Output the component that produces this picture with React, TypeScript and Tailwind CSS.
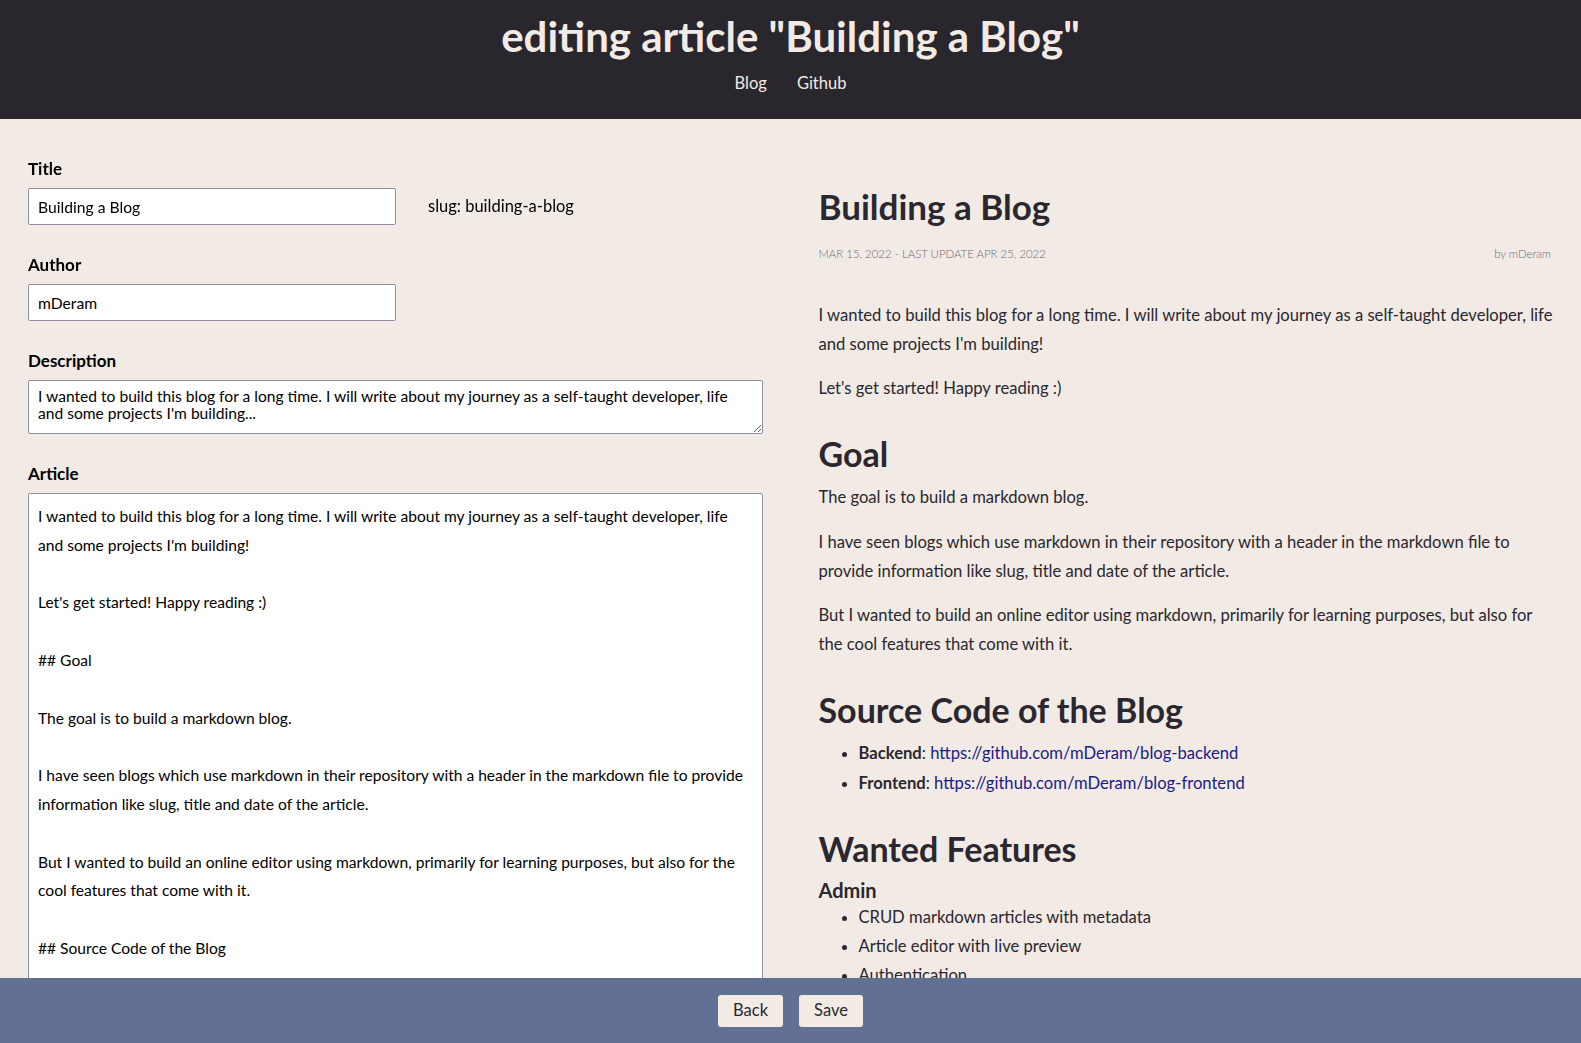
import { useState } from "react";

const ARTICLE = `I wanted to build this blog for a long time. I will write about my journey as a self-taught developer, life and some projects I'm building!

Let's get started! Happy reading :)

## Goal

The goal is to build a markdown blog.

I have seen blogs which use markdown in their repository with a header in the markdown file to provide information like slug, title and date of the article.

But I wanted to build an online editor using markdown, primarily for learning purposes, but also for the cool features that come with it.

## Source Code of the Blog

- **Backend**: https://github.com/mDeram/blog-backend
- **Frontend**: https://github.com/mDeram/blog-frontend

## Wanted Features

### Admin
- CRUD markdown articles with metadata
- Article editor with live preview
- Authentication`;

const FONT = "font-['Lato','Liberation_Sans',sans-serif]";

function Field({ label, children }: { label: string; children: React.ReactNode }) {
  return (
    <div className="mb-[28px]">
      <div className="text-[17px] leading-[24px] font-bold text-black">{label}</div>
      <div className="mt-[7px]">{children}</div>
    </div>
  );
}

export default function App() {
  const [title, setTitle] = useState("Building a Blog");
  const [author, setAuthor] = useState("mDeram");
  const [description, setDescription] = useState(
    "I wanted to build this blog for a long time. I will write about my journey as a self-taught developer, life and some projects I'm building..."
  );
  const [article, setArticle] = useState(ARTICLE);

  const inputCls =
    "block h-[37px] w-[368px] bg-white border border-[#8f8f9d] rounded-[2px] px-[9px] text-[15.7px] text-black outline-none";

  return (
    <div className={`h-screen overflow-hidden bg-[#f1eae5] ${FONT}`}>
      {/* Header */}
      <header className="h-[119px] bg-[#2a262d] flex flex-col items-center pt-[11px]">
        <h1 className="text-[42px] leading-[50px] font-bold text-[#f1eae5]">
          editing article "Building a Blog"
        </h1>
        <nav className="mt-[10px] flex gap-[30px] text-[16.5px] leading-[24px] text-[#f1eae5]">
          <a href="#">Blog</a>
          <a href="#">Github</a>
        </nav>
      </header>

      <main className="grid grid-cols-2 gap-[56px] px-[28px] pt-[38px]">
        {/* Editor */}
        <section>
          <Field label="Title">
            <div className="flex items-center gap-[32px]">
              <input className={inputCls} value={title} onChange={(e) => setTitle(e.target.value)} />
              <span className="text-[16.5px] text-black">slug: building-a-blog</span>
            </div>
          </Field>
          <Field label="Author">
            <input className={inputCls} value={author} onChange={(e) => setAuthor(e.target.value)} />
          </Field>
          <Field label="Description">
            <textarea
              rows={2}
              className="block w-full h-[54px] bg-white border border-[#8f8f9d] rounded-[2px] pl-[9px] pr-[18px] pt-[7px] pb-[8px] text-[15.6px] leading-[17px] text-black outline-none resize-y"
              value={description}
              onChange={(e) => setDescription(e.target.value)}
            />
          </Field>
          <Field label="Article">
            <textarea
              className="block w-full h-[640px] bg-white border border-[#8f8f9d] rounded-[2px] pl-[9px] pr-[18px] pt-[8px] pb-[5px] text-[15.6px] leading-[28.8px] text-black outline-none resize-y"
              value={article}
              onChange={(e) => setArticle(e.target.value)}
            />
          </Field>
        </section>

        {/* Preview */}
        <article className="text-[#2b272e] text-[16.6px] leading-[28.8px]">
          <h1 className="mt-[28px] text-[35px] leading-[42px] font-bold">Building a Blog</h1>
          <div className="mt-[19px] flex justify-between text-[11.4px] leading-[16px] text-[#6f6b72] font-light">
            <span>MAR 15, 2022 - LAST UPDATE APR 25, 2022</span>
            <span className="pr-[2px]">by mDeram</span>
          </div>

          <p className="mt-[39px]">
            I wanted to build this blog for a long time. I will write about my journey as a self-taught developer, life
            and some projects I'm building!
          </p>
          <p className="mt-[15px]">Let's get started! Happy reading :)</p>

          <h2 className="mt-[31px] text-[34px] leading-[42px] font-bold">Goal</h2>
          <p className="mt-[8px]">The goal is to build a markdown blog.</p>
          <p className="mt-[16px]">
            I have seen blogs which use markdown in their repository with a header in the markdown file to provide
            information like slug, title and date of the article.
          </p>
          <p className="mt-[15px]">
            But I wanted to build an online editor using markdown, primarily for learning purposes, but also for the
            cool features that come with it.
          </p>

          <h2 className="mt-[31px] text-[34px] leading-[42px] font-bold">Source Code of the Blog</h2>
          <ul className="mt-[8px] list-disc pl-[40px] space-y-[1px]">
            <li>
              <strong>Backend</strong>:{" "}
              <a href="#" className="text-[#1a1a8f]">https://github.com/mDeram/blog-backend</a>
            </li>
            <li>
              <strong>Frontend</strong>:{" "}
              <a href="#" className="text-[#1a1a8f]">https://github.com/mDeram/blog-frontend</a>
            </li>
          </ul>

          <h2 className="mt-[30px] text-[34px] leading-[42px] font-bold">Wanted Features</h2>
          <h3 className="mt-[8px] text-[20px] leading-[24px] font-bold">Admin</h3>
          <ul className="mt-[1px] list-disc pl-[40px]">
            <li>CRUD markdown articles with metadata</li>
            <li>Article editor with live preview</li>
            <li>Authentication</li>
            <li>Image upload</li>
          </ul>
        </article>
      </main>

      {/* Footer actions */}
      <footer className="fixed bottom-0 left-0 right-0 h-[65px] bg-[#627193] flex items-center justify-center gap-[16px]">
        <button className="h-[32px] px-[15px] rounded-[3px] bg-[#f1eae5] text-[16.5px] text-[#2b272e]">Back</button>
        <button className="h-[32px] px-[15px] rounded-[3px] bg-[#f1eae5] text-[16.5px] text-[#2b272e]">Save</button>
      </footer>
    </div>
  );
}
